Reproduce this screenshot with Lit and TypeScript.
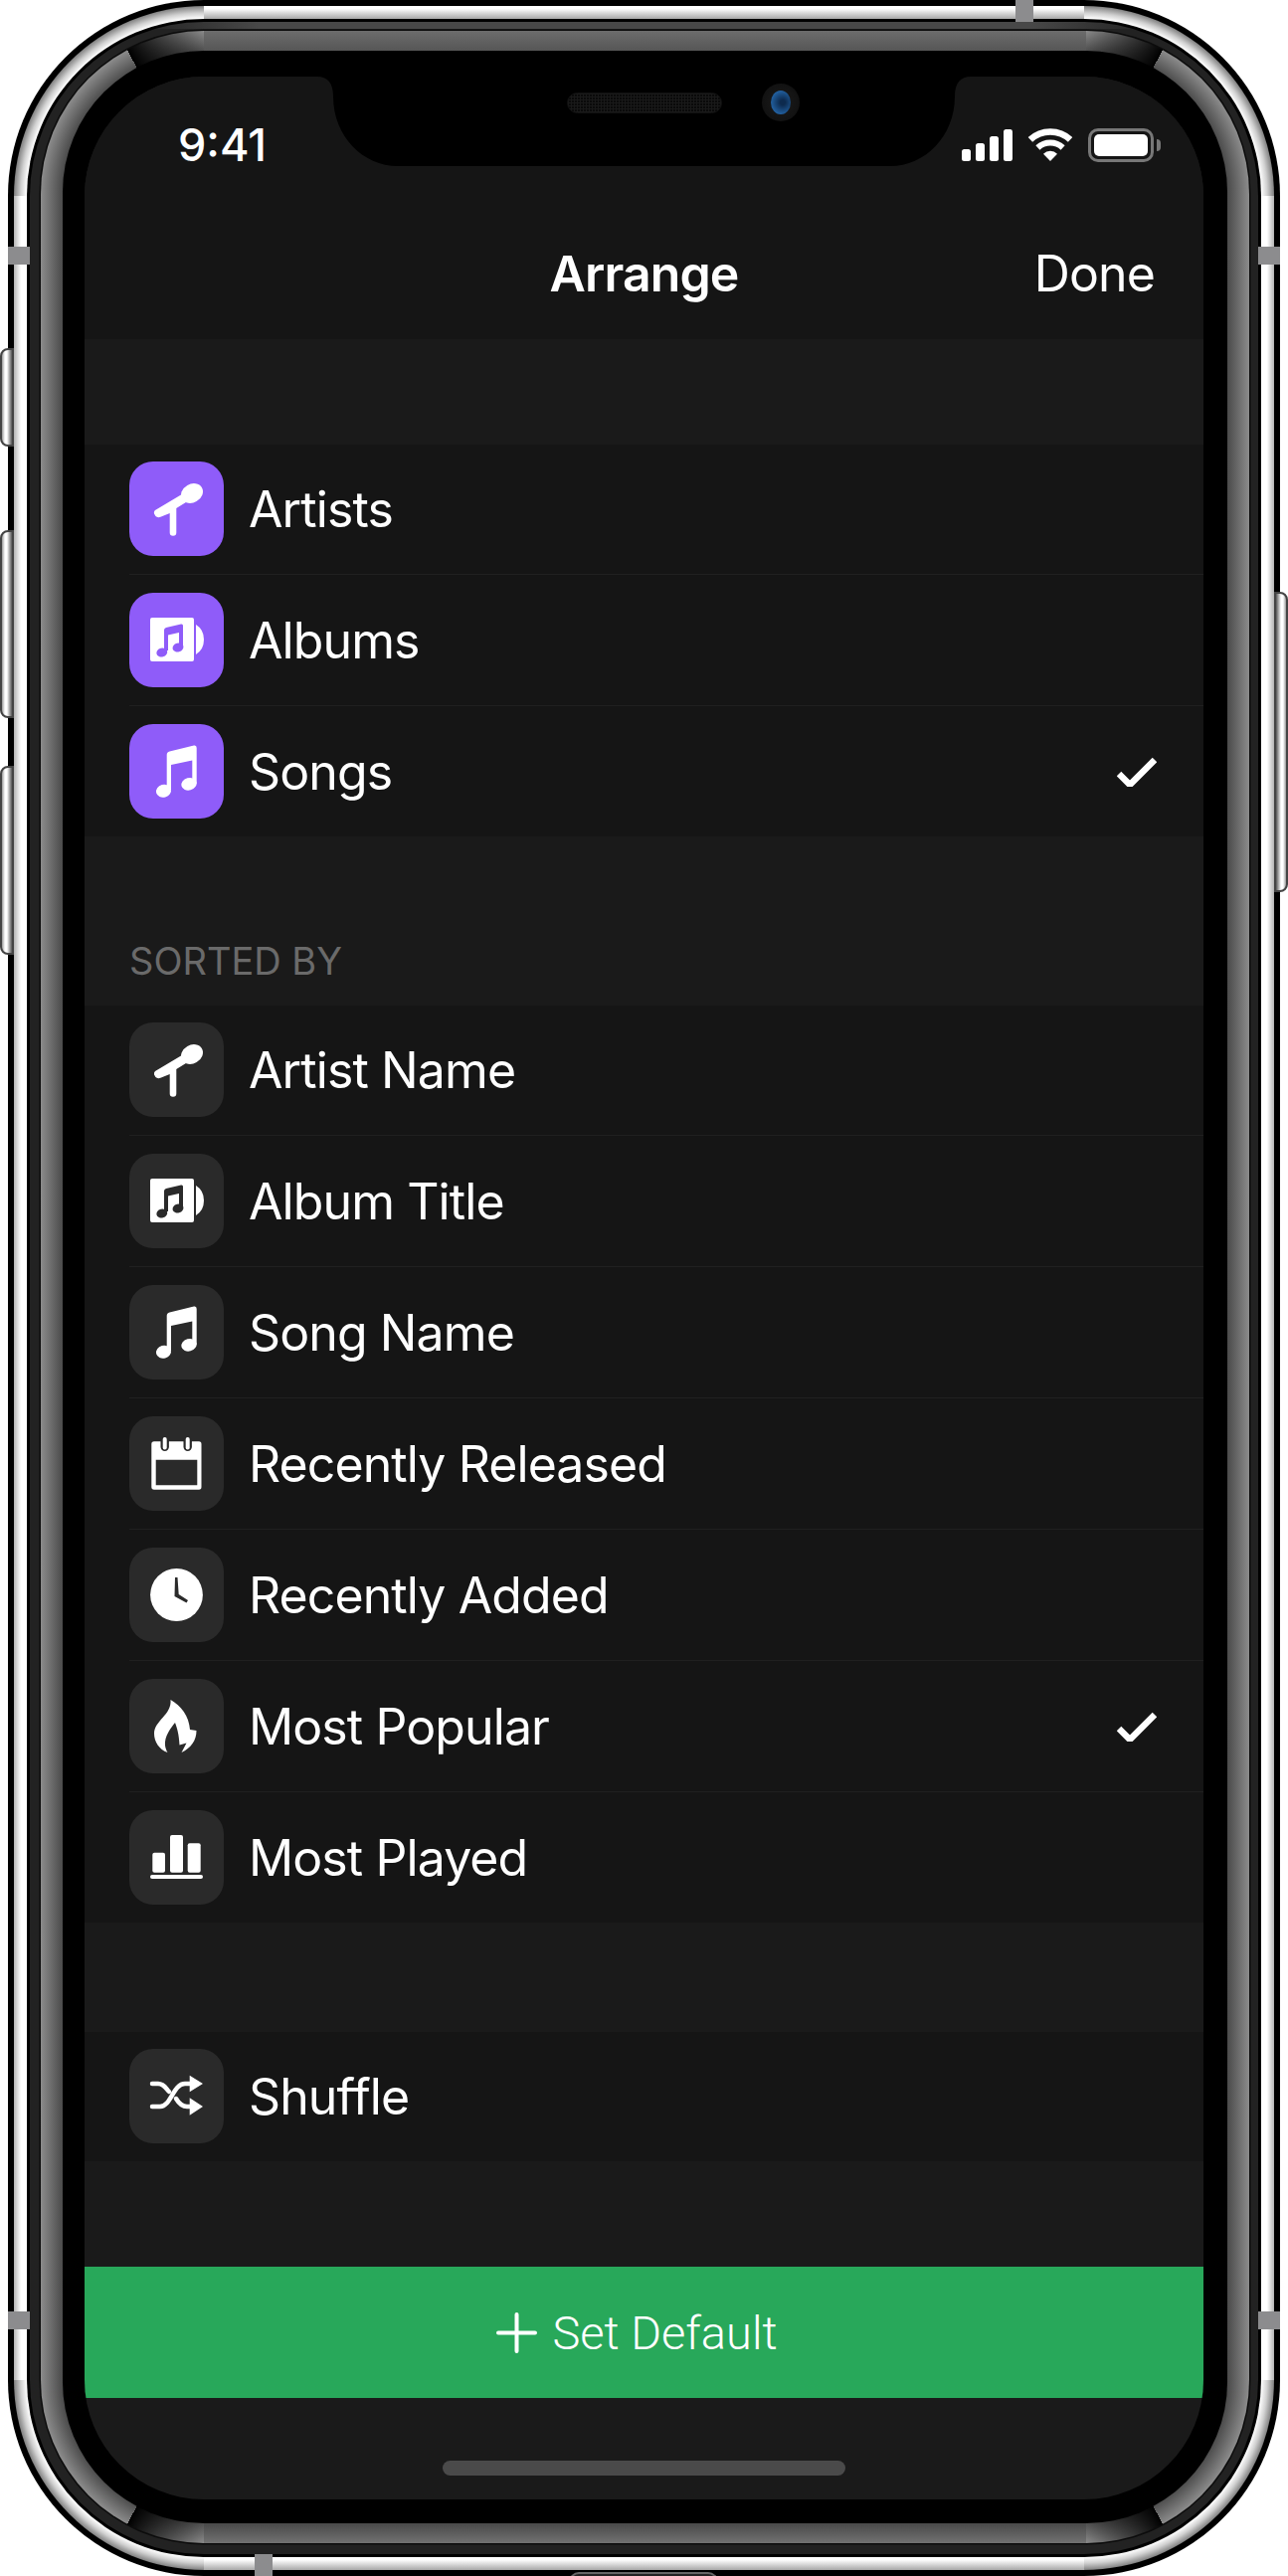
import { LitElement, html, svg, css } from 'lit';
import { customElement } from 'lit/decorators.js';

const icons = {
  mic: svg`
    <ellipse cx="63" cy="32" rx="11.5" ry="9.3" transform="rotate(-30 63 32)" />
    <path d="M26 49 52 33.5 57 41 47.3 47V71.5Q47.3 74.7 44 74.7T40.7 71.5V52L32 55.5Q28.5 57 26.5 55L25 52.5Q24.5 50 26 49Z" />`,
  album: svg`
    <rect x="21" y="25" width="44" height="44" rx="2" />
    <path d="M67 32Q75 37 75 47T67 62Z" />
    <path class="cut" d="M35 58V37.5Q35 35.5 37 35L52 31.5Q54 31 54 33V54.5H50V40L39 42.5V58Z" />
    <ellipse class="cut" cx="32.8" cy="60" rx="5.5" ry="4.5" transform="rotate(-15 32.8 60)" />
    <ellipse class="cut" cx="49" cy="55" rx="5.5" ry="4.5" transform="rotate(-15 49 55)" />`,
  note: svg`
    <path d="M37.7 66V31Q37.7 28 40.5 27.4L65 21.6Q67.7 21 67.7 24V60H63.3V36.5L42 41V66Z" />
    <ellipse cx="34.5" cy="67.2" rx="7.6" ry="6.4" transform="rotate(-15 34.5 67.2)" />
    <ellipse cx="60" cy="60.3" rx="7.8" ry="6.2" transform="rotate(-15 60 60.3)" />`,
  calendar: svg`
    <path fill-rule="evenodd" d="M25 25.3H70Q72.5 25.3 72.5 28V71Q72.5 73.7 70 73.7H25Q22.3 73.7 22.3 71V28Q22.3 25.3 25 25.3ZM26.7 43.7V69.3H68.3V43.7Z" />
    <rect class="cut" x="31.5" y="21" width="8.4" height="14" rx="4.2" />
    <rect class="cut" x="54.5" y="21" width="8.4" height="14" rx="4.2" />
    <rect x="33.7" y="21" width="4" height="12.5" rx="2" />
    <rect x="56.7" y="21" width="4" height="12.5" rx="2" />`,
  clock: svg`
    <circle cx="47.5" cy="47.5" r="26.4" />
    <path class="cut" d="M46 30H48.5L49.7 47 59 53 57.5 55.5 45.5 49Z" />`,
  flame: svg`
    <path d="M41.5 21C52 27 60 37 61 51L67.5 52C67.5 62 62 69.5 52.5 74L57.5 64.5 50.5 66.5C50 56 48 49 46 44C42 49 35 58 36 67C36.5 70 37.5 72.5 38.5 74C30 71 25 63 25 55C25 42 43 36 41.5 21Z" />`,
  bars: svg`
    <rect x="23.3" y="42.7" width="12.7" height="20" rx="2" />
    <rect x="41" y="25" width="13" height="37.7" rx="2" />
    <rect x="58.7" y="33.3" width="13" height="29.4" rx="2" />
    <rect x="21" y="65" width="53" height="4" rx="2" />`,
  shuffle: svg`
    <path class="line" d="M23 35H29C35 35 37 40 40 43M47 50C50 55 53 58 58 58H63M23 58H31C42 58 44 35 56 35H63" />
    <path d="M60.7 26.7 74 35 60.7 43.3ZM60.7 49.3 74 58 60.7 66.7Z" />`,
};

type IconName = keyof typeof icons;
type Row = { label: string; icon: IconName; checked?: boolean };

const viewRows: Row[] = [
  { label: 'Artists', icon: 'mic' },
  { label: 'Albums', icon: 'album' },
  { label: 'Songs', icon: 'note', checked: true },
];

const sortRows: Row[] = [
  { label: 'Artist Name', icon: 'mic' },
  { label: 'Album Title', icon: 'album' },
  { label: 'Song Name', icon: 'note' },
  { label: 'Recently Released', icon: 'calendar' },
  { label: 'Recently Added', icon: 'clock' },
  { label: 'Most Popular', icon: 'flame', checked: true },
  { label: 'Most Played', icon: 'bars' },
];

const shuffleRows: Row[] = [{ label: 'Shuffle', icon: 'shuffle' }];

@customElement('app-root')
export class AppRoot extends LitElement {
  static styles = css`
    :host {
      display: block;
      width: 1295px;
      height: 2590px;
      background: #fff;
      font-family: Inter, "Liberation Sans", sans-serif;
      color: #fff;
    }

    .page {
      position: relative;
      width: 1295px;
      height: 2590px;
      padding: 0 8px;
      box-sizing: border-box;
      overflow: hidden;
    }

    /* hardware buttons and antenna lines */
    .btn {
      position: absolute;
      width: 14px;
      box-sizing: border-box;
      border: 2px solid #444;
      border-radius: 8px 0 0 8px;
      background: linear-gradient(to right, #999, #fff 30%, #fff 50%, #555);
    }
    .btn-left {
      left: 0;
    }
    .btn-right {
      right: 0;
      transform: scaleX(-1);
    }
    .mute { top: 350px; height: 99px; }
    .vol-up { top: 533px; height: 189px; }
    .vol-down { top: 770px; height: 190px; }
    .power { top: 595px; height: 302px; }

    .stripe {
      position: absolute;
      background: #8c8c8e;
    }
    .stripe-side { width: 22px; height: 18px; }
    .stripe-flat { width: 18px; height: 22px; }

    .port {
      position: absolute;
      left: 572px;
      bottom: -6px;
      width: 150px;
      height: 10px;
      box-sizing: border-box;
      border: 2px solid #666;
      border-radius: 10px 10px 0 0;
      background: #222;
    }

    /* device body, one nested ring per band */
    .device {
      height: 100%;
      box-sizing: border-box;
      padding: 6px;
      border-radius: 197px;
      background: #000;
    }

    .rim {
      height: 100%;
      box-sizing: border-box;
      padding: 13px;
      border-radius: 191px;
      background-color: #fff;
      background-repeat: no-repeat;
      background-image:
        radial-gradient(circle at 100% 100%, #fff 178px, #d0d0d0 184px, #808080 191px),
        radial-gradient(circle at 0 100%, #fff 178px, #d0d0d0 184px, #808080 191px),
        radial-gradient(circle at 100% 0, #fff 178px, #d0d0d0 184px, #808080 191px),
        radial-gradient(circle at 0 0, #fff 178px, #d0d0d0 184px, #808080 191px),
        linear-gradient(to bottom, #fff 20%, #a8a8a8),
        linear-gradient(to bottom, #fff 20%, #a8a8a8),
        linear-gradient(to right, #b4b4b4, #fff 55%),
        linear-gradient(to left, #b4b4b4, #fff 55%);
      background-size:
        191px 191px, 191px 191px, 191px 191px, 191px 191px,
        calc(100% - 382px) 13px, calc(100% - 382px) 13px,
        13px calc(100% - 382px), 13px calc(100% - 382px);
      background-position:
        0 0, 100% 0, 0 100%, 100% 100%,
        50% 0, 50% 100%,
        0 50%, 100% 50%;
    }

    .gap {
      height: 100%;
      box-sizing: border-box;
      padding: 3px;
      border-radius: 178px;
      background: #000;
    }

    .band {
      height: 100%;
      box-sizing: border-box;
      padding: 9px 9px 11px 11px;
      border-radius: 175px;
      background-color: #222;
      background-repeat: no-repeat;
      background-image: linear-gradient(to right, transparent, #484848 120px, #484848 calc(100% - 120px), transparent);
      background-size: calc(100% - 220px) 7px;
      background-position: 50% 0;
    }

    .glass {
      height: 100%;
      box-sizing: border-box;
      padding: 20px 22px;
      border-radius: 164px;
      background-color: #000;
      box-shadow: 0 0 0 1.5px #0c0c0c;
      background-repeat: no-repeat;
      background-image:
        conic-gradient(from 270deg at 100% 100%, transparent 0 62deg, #000 62deg, transparent 90deg),
        conic-gradient(from 0deg at 0 100%, transparent 0deg, #000 28deg, transparent 28deg),
        conic-gradient(from 180deg at 100% 0, transparent 0deg, #000 28deg, transparent 28deg),
        conic-gradient(from 90deg at 0 0, transparent 0 62deg, #000 62deg, transparent 90deg),
        radial-gradient(circle at 100% 100%, #4a4a4a 142px, #8c8c8c 164px),
        radial-gradient(circle at 0 100%, #4a4a4a 142px, #8c8c8c 164px),
        radial-gradient(circle at 100% 0, #4a4a4a 142px, #8c8c8c 164px),
        radial-gradient(circle at 0 0, #4a4a4a 142px, #8c8c8c 164px),
        linear-gradient(to bottom, #6c6c6c, #565656),
        linear-gradient(to bottom, #484848, #727272),
        linear-gradient(to right, #8c8c8c, #4a4a4a),
        linear-gradient(to left, #8c8c8c, #4a4a4a);
      background-size:
        164px 164px, 164px 164px, 164px 164px, 164px 164px,
        164px 164px, 164px 164px, 164px 164px, 164px 164px,
        calc(100% - 328px) 20px, calc(100% - 328px) 20px,
        22px calc(100% - 328px), 22px calc(100% - 328px);
      background-position:
        0 0, 100% 0, 0 100%, 100% 100%,
        0 0, 100% 0, 0 100%, 100% 100%,
        50% 0, 50% 100%,
        0 50%, 100% 50%;
    }

    .bezel {
      height: 100%;
      box-sizing: border-box;
      padding: 26px 24px 24px 22px;
      border-radius: 142px;
      background: #000;
    }

    .screen {
      position: relative;
      display: flex;
      flex-direction: column;
      height: 100%;
      border-radius: 120px;
      overflow: hidden;
      background: #1a1a1a;
    }

    /* notch */
    .notch {
      position: absolute;
      top: 0;
      left: 230px;
      width: 665px;
      height: 90px;
    }
    .notch svg {
      display: block;
      fill: #000;
    }
    .speaker {
      position: absolute;
      left: 255px;
      top: 16px;
      width: 156px;
      height: 21px;
      box-sizing: border-box;
      border: 1px solid #111;
      border-radius: 11px;
      background-color: #0a0a0a;
      background-image:
        repeating-linear-gradient(to right, #191919 0 1px, transparent 1px 3px),
        repeating-linear-gradient(to bottom, #191919 0 1px, transparent 1px 3px);
    }
    .camera {
      position: absolute;
      left: 451px;
      top: 7px;
      width: 38px;
      height: 38px;
      border-radius: 50%;
      background: radial-gradient(circle, #1c1c1c, #0d0d0d);
      display: flex;
      align-items: center;
      justify-content: center;
    }
    .lens {
      width: 20px;
      height: 24px;
      border-radius: 50%;
      background: radial-gradient(circle at 60% 50%, #0d2a4e 15%, #2364a6 75%, #10243d);
    }

    /* top bars */
    .head {
      background: #151515;
    }
    .status {
      display: flex;
      justify-content: space-between;
      align-items: flex-start;
      height: 132px;
      box-sizing: border-box;
      padding: 52px 43px 0 94px;
    }
    .time {
      font-size: 45px;
      font-weight: 500;
      line-height: 34px;
    }
    .indicators {
      display: flex;
      align-items: flex-start;
      gap: 15px;
    }
    .indicators svg {
      display: block;
      fill: #fff;
    }
    .wifi-arc {
      fill: none;
      stroke: #fff;
    }
    .battery {
      display: flex;
      align-items: center;
      gap: 3px;
    }
    .battery-body {
      width: 66px;
      height: 34px;
      box-sizing: border-box;
      padding: 3px;
      border: 3px solid #777;
      border-radius: 10px;
    }
    .battery-level {
      height: 100%;
      border-radius: 5px;
      background: #fff;
    }
    .battery-cap {
      width: 4px;
      height: 12px;
      border-radius: 0 4px 4px 0;
      background: #777;
    }

    .nav {
      display: grid;
      grid-template-columns: 1fr auto 1fr;
      align-items: center;
      height: 132px;
      font-size: 50px;
      letter-spacing: -0.9px;
    }
    .title {
      grid-column: 2;
      font-weight: 600;
    }
    .done {
      grid-column: 3;
      justify-self: end;
      padding-right: 49px;
    }

    /* list sections */
    .spacer-a { height: 106px; }
    .spacer-c { height: 110px; }
    .label-wrap {
      display: flex;
      align-items: flex-end;
      height: 170px;
      box-sizing: border-box;
      padding: 0 0 27px 45px;
    }
    .label {
      font-size: 38px;
      line-height: 36px;
      color: #6a6a6a;
    }

    .group {
      background: #151515;
      padding-left: 45px;
    }
    .row {
      display: flex;
      align-items: center;
      height: 130px;
      font-size: 50px;
      letter-spacing: -0.9px;
    }
    .row:not(:last-child) {
      border-bottom: 1px solid #202020;
      margin-bottom: 1px;
    }
    .tile {
      --tile: #2a2a2a;
      width: 95px;
      height: 95px;
      flex: none;
      align-self: flex-start;
      margin: 17px 25px 0 0;
      border-radius: 24px;
      background: var(--tile);
    }
    .tile.accent {
      --tile: #8f5cf9;
    }
    .tile svg {
      display: block;
      fill: #fff;
    }
    .tile .cut {
      fill: var(--tile);
    }
    .tile .line {
      fill: none;
      stroke: #fff;
      stroke-width: 4.5;
      stroke-linecap: round;
    }
    .check {
      margin-left: auto;
      margin-right: 47px;
      fill: none;
      stroke: #fff;
      stroke-width: 6.5;
    }

    .set-default {
      display: flex;
      align-items: center;
      justify-content: center;
      gap: 15px;
      height: 132px;
      margin-top: 106px;
      padding-right: 14px;
      background: #28a85a;
      font-family: Roboto, sans-serif;
      font-size: 47px;
      font-weight: 300;
    }
    .set-default svg {
      display: block;
      stroke: #fff;
      stroke-width: 4;
      stroke-linecap: round;
    }

    .foot {
      flex: 1;
      padding-top: 63px;
    }
    .home {
      width: 405px;
      height: 15px;
      margin: 0 auto;
      border-radius: 8px;
      background: #4a4a4a;
    }
  `;

  renderRow(row: Row, accent: boolean) {
    return html`
      <div class="row">
        <div class="tile ${accent ? 'accent' : ''}">
          <svg width="95" height="95" viewBox="0 0 95 95">${icons[row.icon]}</svg>
        </div>
        <span>${row.label}</span>
        ${row.checked
          ? html`<svg class="check" width="40" height="30" viewBox="0 0 40 30"><path d="M2 17 13 28 38 3" /></svg>`
          : ''}
      </div>
    `;
  }

  render() {
    return html`
      <div class="page">
        <div class="btn btn-left mute"></div>
        <div class="btn btn-left vol-up"></div>
        <div class="btn btn-left vol-down"></div>
        <div class="btn btn-right power"></div>
        <div class="port"></div>

        <div class="device">
          <div class="rim">
            <div class="gap">
              <div class="band">
                <div class="glass">
                  <div class="bezel">
                    <div class="screen">
                      <div class="head">
                        <div class="status">
                          <span class="time">9:41</span>
                          <div class="indicators">
                            <svg width="51" height="34" viewBox="0 0 51 34">
                              <rect x="0" y="21" width="9" height="12" rx="2.5" />
                              <rect x="14" y="15" width="9" height="18" rx="2.5" />
                              <rect x="28" y="8" width="9" height="25" rx="2.5" />
                              <rect x="42" y="1" width="9" height="32" rx="2.5" />
                            </svg>
                            <svg width="46" height="34" viewBox="0 0 46 34">
                              <path class="wifi-arc" stroke-width="6.5" d="M2.9 11.4A29.5 29.5 0 0 1 43.1 11.4" />
                              <path class="wifi-arc" stroke-width="6" d="M10.4 19.5A18.5 18.5 0 0 1 35.6 19.5" />
                              <path d="M23 33 16 25.7A10 10 0 0 1 30 25.7Z" />
                            </svg>
                            <div class="battery">
                              <div class="battery-body"><div class="battery-level"></div></div>
                              <div class="battery-cap"></div>
                            </div>
                          </div>
                        </div>
                        <div class="nav">
                          <span class="title">Arrange</span>
                          <span class="done">Done</span>
                        </div>
                      </div>

                      <div class="spacer-a"></div>
                      <div class="group">${viewRows.map((r) => this.renderRow(r, true))}</div>

                      <div class="label-wrap"><span class="label">SORTED BY</span></div>
                      <div class="group">${sortRows.map((r) => this.renderRow(r, false))}</div>

                      <div class="spacer-c"></div>
                      <div class="group">${shuffleRows.map((r) => this.renderRow(r, false))}</div>

                      <div class="set-default">
                        <svg width="41" height="41" viewBox="0 0 41 41"><path d="M20.5 2V39M2 20.5H39" /></svg>
                        <span>Set Default</span>
                      </div>
                      <div class="foot"><div class="home"></div></div>

                      <div class="notch">
                        <svg width="665" height="90" viewBox="0 0 665 90">
                          <path d="M4 0C14 0 20 6 20 20C20 60 50 90 85 90H580C615 90 645 60 645 20C645 6 651 0 661 0Z" />
                        </svg>
                        <div class="speaker"></div>
                        <div class="camera"><div class="lens"></div></div>
                      </div>
                    </div>
                  </div>
                </div>
              </div>
            </div>
          </div>
        </div>

        <div class="stripe stripe-side" style="left:8px;top:248px"></div>
        <div class="stripe stripe-side" style="left:1265px;top:248px"></div>
        <div class="stripe stripe-side" style="left:8px;top:2324px"></div>
        <div class="stripe stripe-side" style="left:1265px;top:2324px"></div>
        <div class="stripe stripe-flat" style="left:1021px;top:0"></div>
        <div class="stripe stripe-flat" style="left:256px;top:2568px"></div>
      </div>
    `;
  }
}
